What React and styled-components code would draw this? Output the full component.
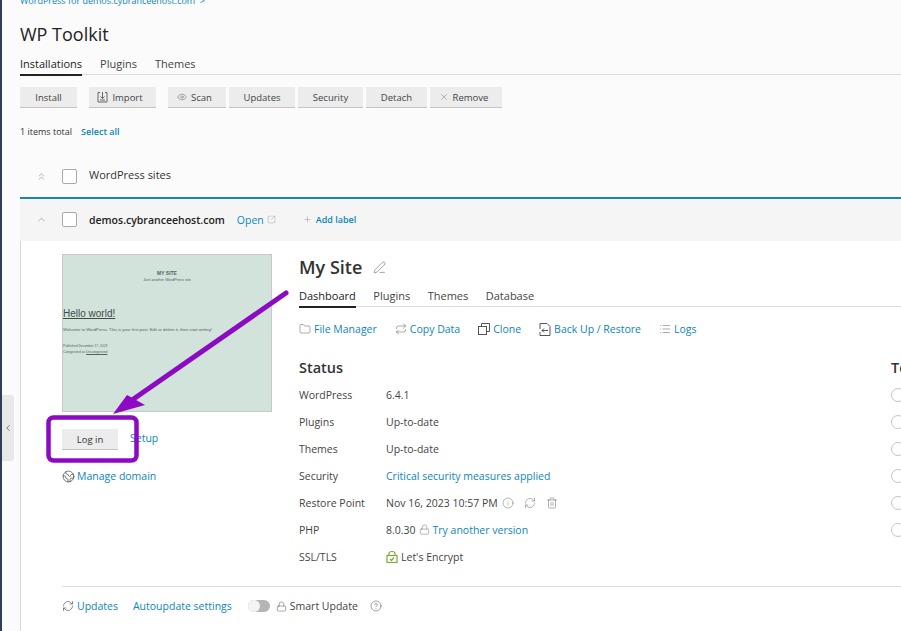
import React from "react";
import styled, { createGlobalStyle } from "styled-components";
import {
  ChevronLeft,
  ChevronUp,
  ChevronsUp,
  Eye,
  X,
  Plus,
  SquareArrowOutUpRight,
  PenLine,
  Folder,
  RefreshCw,
  Repeat,
  List,
  Info,
  Trash2,
  Lock,
  CircleHelp,
  Earth
} from "lucide-react";

const GlobalStyle = createGlobalStyle`
  html, body {
    margin: 0;
    padding: 0;
    width: 901px;
    height: 631px;
    overflow: hidden;
    background: #fbfbfb;
  }
`;

const Page = styled.div`
  position: relative;
  width: 901px;
  height: 631px;
  overflow: hidden;
  box-sizing: border-box;
  padding-left: 20px;
  border-left: 2px solid #2f3e50;
  font-family: "Open Sans", "Liberation Sans", sans-serif;
  font-size: 11px;
  color: #333;
  background: #fbfbfb;
`;

const Content = styled.div`
  margin-left: -2px;
  width: 881px;
`;

const Breadcrumb = styled.div`
  height: 6px;
  line-height: 1px;
  font-size: 9px;
  color: #0e86b8;
  white-space: nowrap;
`;

const Title = styled.h1`
  margin: 14px 0 0;
  font-size: 18px;
  line-height: 28px;
  font-weight: 400;
  color: #222;
`;

const TabBar = styled.div`
  display: flex;
  gap: ${p => p.$gap}px;
  border-bottom: 1px solid #ddd;
  height: 19px;
  margin-top: ${p => p.$top}px;
`;

const Tab = styled.div`
  height: 100%;
  font-size: 11px;
  line-height: 18px;
  color: ${p => (p.$active ? "#222" : "#444")};
  border-bottom: ${p => (p.$active ? "2px solid #222" : "none")};
`;

const Toolbar = styled.div`
  display: flex;
  margin-top: 12px;
`;

const ToolButton = styled.button`
  display: flex;
  align-items: center;
  justify-content: center;
  gap: 4px;
  box-sizing: border-box;
  width: ${p => p.$w}px;
  height: 21px;
  margin-right: ${p => p.$mr || 3}px;
  padding: 0 ${p => (p.$icon ? 5 : 0)}px 0 0;
  border: 0;
  border-bottom: 1px solid #c4c4c4;
  background: #ececec;
  font-family: inherit;
  font-size: 9.5px;
  color: #444;
  svg {
    color: #666;
  }
`;

const Totals = styled.div`
  display: flex;
  gap: 9px;
  margin-top: 17px;
  font-size: 9px;
  line-height: 13px;
`;

const Link = styled.a`
  color: #0e86b8;
  font-size: ${p => p.$size || 10.5}px;
  font-weight: ${p => p.$bold || 400};
  text-decoration: none;
  white-space: nowrap;
`;

const SetupLink = styled(Link)`
  margin-bottom: 3px;
`;

const GroupRow = styled.div`
  display: flex;
  align-items: center;
  height: 22px;
  margin-top: 27px;
  padding-left: 15px;
  font-size: 11px;
`;

const GroupName = styled.span`
  padding-bottom: 3px;
`;

const Caret = styled.span`
  display: flex;
  justify-content: center;
  width: 12px;
  margin-right: 15px;
  color: #777;
`;

const Check = styled.span`
  width: 15px;
  height: 15px;
  box-sizing: border-box;
  border: 1px solid #aaa;
  border-radius: 2px;
  background: #fff;
  margin-right: 12px;
`;

const Card = styled.section`
  margin-top: 10px;
  height: 440px;
  background: #fff;
  border-left: 1px solid #d8d8d8;
`;

const CardHead = styled.div`
  display: flex;
  align-items: center;
  height: 41px;
  margin-left: -1px;
  padding: 0 0 1px 15px;
  background: #f5f5f5;
  border-top: 2px solid #1587b5;
`;

const SiteName = styled.span`
  font-size: 10.5px;
  font-weight: 600;
  color: #222;
  margin-right: 12px;
`;

const OpenLink = styled.span`
  display: flex;
  align-items: center;
  gap: 3px;
  margin-right: 27px;
  color: #0e86b8;
  font-size: 10.5px;
  svg {
    color: #88a;
  }
`;

const AddLabel = styled.span`
  display: flex;
  align-items: center;
  gap: 4px;
  color: #0e86b8;
  font-size: 9px;
  font-weight: 600;
  svg {
    color: #777;
  }
`;

const CardBody = styled.div`
  display: flex;
  padding: 13px 0 0 41px;
`;

const LeftCol = styled.div`
  width: 237px;
  flex: none;
`;

const Preview = styled.div`
  width: 210px;
  height: 158px;
  box-sizing: border-box;
  border: 1px solid #c8c8c8;
  background: #d2e3dc;
  font-family: "Liberation Sans", sans-serif;
  color: #56625e;
  overflow: hidden;
`;

const PreviewTitle = styled.div`
  margin-top: 15px;
  text-align: center;
  font-size: 5px;
  line-height: 7px;
  font-weight: 700;
`;

const PreviewTag = styled.div`
  text-align: center;
  font-size: 3.8px;
  line-height: 6px;
`;

const PreviewHeading = styled.div`
  margin-top: 24px;
  font-size: 10px;
  line-height: 14px;
  text-decoration: underline;
  color: #3f4a47;
`;

const PreviewText = styled.div`
  margin-top: ${p => p.$top}px;
  font-size: ${p => p.$size}px;
  line-height: 6px;
  white-space: nowrap;
  u {
    text-decoration: underline;
  }
`;

const LoginRow = styled.div`
  display: flex;
  align-items: center;
  gap: 12px;
  margin-top: 17px;
`;

const LoginButton = styled.button`
  width: 56px;
  height: 21px;
  padding: 0;
  border: 0;
  border-bottom: 1px solid #c4c4c4;
  background: #ececec;
  font-family: inherit;
  font-size: 9.5px;
  color: #333;
`;

const DomainRow = styled.div`
  display: flex;
  align-items: center;
  gap: 2px;
  margin-top: 19px;
  svg {
    color: #333;
  }
`;

const MainCol = styled.div`
  flex: 1;
  min-width: 0;
`;

const NameRow = styled.div`
  display: flex;
  align-items: center;
  gap: 11px;
  height: 26px;
  svg {
    color: #555;
  }
`;

const SiteTitle = styled.h2`
  margin: 0;
  font-size: 18px;
  line-height: 26px;
  font-weight: 600;
  color: #333;
`;

const Actions = styled.div`
  display: flex;
  align-items: center;
  margin-top: 14px;
  height: 16px;
`;

const Action = styled.span`
  display: flex;
  align-items: center;
  gap: 3px;
  margin-right: 18px;
  color: #0e86b8;
  font-size: 10.5px;
  svg {
    color: #555;
  }
`;

const Columns = styled.div`
  display: flex;
  margin-top: 20px;
`;

const StatusCol = styled.div`
  width: 592px;
  flex: none;
`;

const SectionTitle = styled.h3`
  margin: 0 0 2px;
  font-size: 14.5px;
  line-height: 22px;
  font-weight: 600;
  color: #333;
  white-space: nowrap;
`;

const StatusRow = styled.div`
  display: flex;
  align-items: center;
  height: 27px;
  font-size: 10.5px;
  color: #444;
`;

const StatusLabel = styled.span`
  width: 87px;
  flex: none;
`;

const StatusValue = styled.span`
  display: flex;
  align-items: center;
  gap: 3px;
  svg {
    color: #666;
  }
`;

const RestoreIcons = styled.span`
  display: flex;
  align-items: center;
  gap: 10px;
  margin-left: 1px;
`;

const Radio = styled.div`
  height: 27px;
  display: flex;
  align-items: center;
  &::before {
    content: "";
    width: 12px;
    height: 12px;
    border: 1px solid #c4c4c4;
    border-radius: 50%;
    flex: none;
  }
`;

const Divider = styled.hr`
  margin: 16px 0 0 41px;
  border: 0;
  border-top: 1px solid #ddd;
`;

const Footer = styled.div`
  display: flex;
  align-items: center;
  height: 38px;
  padding-left: 41px;
  font-size: 10.5px;
`;

const FooterItem = styled.span`
  display: flex;
  align-items: center;
  gap: 3px;
  margin-right: ${p => p.$mr}px;
  color: ${p => p.$c || "#0e86b8"};
  svg {
    color: #444;
  }
`;

const Toggle = styled.span`
  position: relative;
  width: 22px;
  height: 12px;
  border-radius: 6px;
  background: #b5b5b5;
  margin-right: 6px;
  &::before {
    content: "";
    position: absolute;
    left: 0;
    top: 0;
    width: 12px;
    height: 12px;
    border-radius: 50%;
    background: #f4f4f4;
  }
`;

const SideHandle = styled.div`
  position: absolute;
  left: 0;
  top: 395px;
  width: 12px;
  height: 66px;
  display: flex;
  align-items: center;
  justify-content: center;
  background: #e8e8e8;
  border-radius: 0 3px 3px 0;
  color: #333;
`;

const Overlay = styled.svg`
  position: absolute;
  left: -2px;
  top: 0;
  pointer-events: none;
`;

const ImportIcon = () => (
  <svg width="11" height="12" viewBox="0 0 11 12" fill="none" stroke="currentColor" strokeWidth="1">
    <path d="M3 1.5H1V11H10V1.5H8M5.5 1V7.5M3.5 5.5L5.5 7.5L7.5 5.5M3 9H8" />
  </svg>
);

const CloneIcon = () => (
  <svg width="12" height="12" viewBox="0 0 12 12" fill="none" stroke="currentColor" strokeWidth="1">
    <path d="M3.5 3V.5H11.5V8.5H9" />
    <rect x=".5" y="3.5" width="8" height="8" />
  </svg>
);

const BackupIcon = () => (
  <svg width="12" height="13" viewBox="0 0 12 13" fill="none" stroke="currentColor" strokeWidth="1">
    <path d="M1 6V.5H8L11 3.5V12.5H1V9" />
    <path d="M9 7.5H3M5 5.5L3 7.5L5 9.5" />
  </svg>
);

const SslIcon = () => (
  <svg width="12" height="13" viewBox="0 0 12 13" fill="none" stroke="#7fa83c" strokeWidth="1.2">
    <rect x="1" y="5.5" width="10" height="7" />
    <path d="M3 5.5V3.5C3 .8 9 .8 9 3.5V5.5M4 9L5.5 10.5L8 7.5" />
  </svg>
);

const items = [
  { label: "Install", w: 57, mr: 12 },
  { label: "Import", w: 67, mr: 12, icon: <ImportIcon /> },
  { label: "Scan", w: 58, icon: <Eye size={10} strokeWidth={1.2} /> },
  { label: "Updates", w: 66 },
  { label: "Security", w: 65 },
  { label: "Detach", w: 61 },
  { label: "Remove", w: 72, icon: <X size={10} strokeWidth={1} /> }
];

export default function App() {
  return (
    <Page>
      <GlobalStyle />
      <Content>
        <Breadcrumb>WordPress for demos.cybranceehost.com &nbsp;&gt;</Breadcrumb>
        <Title>WP Toolkit</Title>
        <TabBar $gap={18} $top={7}>
          <Tab $active>Installations</Tab>
          <Tab>Plugins</Tab>
          <Tab>Themes</Tab>
        </TabBar>
        <Toolbar>
          {items.map(el => (
            <ToolButton key={el.label} $w={el.w} $mr={el.mr} $icon={!!el.icon}>
              {el.icon}
              {el.label}
            </ToolButton>
          ))}
        </Toolbar>
        <Totals>
          <span>1 items total</span>
          <Link $size={9} $bold={600}>Select all</Link>
        </Totals>
        <GroupRow>
          <Caret><ChevronsUp size={11} strokeWidth={1.2} /></Caret>
          <Check />
          <GroupName>WordPress sites</GroupName>
        </GroupRow>
        <Card>
          <CardHead>
            <Caret><ChevronUp size={11} strokeWidth={1.2} /></Caret>
            <Check />
            <SiteName>demos.cybranceehost.com</SiteName>
            <OpenLink>Open <SquareArrowOutUpRight size={9} strokeWidth={1} /></OpenLink>
            <AddLabel><Plus size={9} strokeWidth={1} /> Add label</AddLabel>
          </CardHead>
          <CardBody>
            <LeftCol>
              <Preview>
                <PreviewTitle>MY SITE</PreviewTitle>
                <PreviewTag>Just another WordPress site</PreviewTag>
                <PreviewHeading>Hello world!</PreviewHeading>
                <PreviewText $top={6} $size={4.2}>Welcome to WordPress. This is your first post. Edit or delete it, then start writing!</PreviewText>
                <PreviewText $top={10} $size={3.3}>Published December 17, 2023</PreviewText>
                <PreviewText $top={0} $size={3.3}>Categorized as <u>Uncategorized</u></PreviewText>
              </Preview>
              <LoginRow>
                <LoginButton>Log in</LoginButton>
                <SetupLink>Setup</SetupLink>
              </LoginRow>
              <DomainRow>
                <Earth size={13} strokeWidth={1.2} />
                <Link>Manage domain</Link>
              </DomainRow>
            </LeftCol>
            <MainCol>
              <NameRow>
                <SiteTitle>My Site</SiteTitle>
                <PenLine size={13} strokeWidth={1} />
              </NameRow>
              <TabBar $gap={17.5} $top={7}>
                <Tab $active>Dashboard</Tab>
                <Tab>Plugins</Tab>
                <Tab>Themes</Tab>
                <Tab>Database</Tab>
              </TabBar>
              <Actions>
                <Action><Folder size={12} strokeWidth={1} /> File Manager</Action>
                <Action><Repeat size={12} strokeWidth={1} /> Copy Data</Action>
                <Action><CloneIcon /> Clone</Action>
                <Action><BackupIcon /> Back Up / Restore</Action>
                <Action><List size={12} strokeWidth={1} /> Logs</Action>
              </Actions>
              <Columns>
                <StatusCol>
                  <SectionTitle>Status</SectionTitle>
                  <StatusRow><StatusLabel>WordPress</StatusLabel><StatusValue>6.4.1</StatusValue></StatusRow>
                  <StatusRow><StatusLabel>Plugins</StatusLabel><StatusValue>Up-to-date</StatusValue></StatusRow>
                  <StatusRow><StatusLabel>Themes</StatusLabel><StatusValue>Up-to-date</StatusValue></StatusRow>
                  <StatusRow><StatusLabel>Security</StatusLabel><StatusValue><Link>Critical security measures applied</Link></StatusValue></StatusRow>
                  <StatusRow>
                    <StatusLabel>Restore Point</StatusLabel>
                    <StatusValue>
                      Nov 16, 2023 10:57 PM
                      <RestoreIcons>
                        <Info size={12} strokeWidth={1} />
                        <RefreshCw size={12} strokeWidth={1} />
                        <Trash2 size={12} strokeWidth={1} />
                      </RestoreIcons>
                    </StatusValue>
                  </StatusRow>
                  <StatusRow>
                    <StatusLabel>PHP</StatusLabel>
                    <StatusValue>8.0.30 <Lock size={11} strokeWidth={1} /> <Link>Try another version</Link></StatusValue>
                  </StatusRow>
                  <StatusRow>
                    <StatusLabel>SSL/TLS</StatusLabel>
                    <StatusValue><SslIcon /> Let's Encrypt</StatusValue>
                  </StatusRow>
                </StatusCol>
                <div>
                  <SectionTitle>Tools</SectionTitle>
                  <Radio /><Radio /><Radio /><Radio /><Radio /><Radio />
                </div>
              </Columns>
            </MainCol>
          </CardBody>
          <Divider />
          <Footer>
            <FooterItem $mr={15}><RefreshCw size={12} strokeWidth={1.2} /> Updates</FooterItem>
            <FooterItem $mr={16}>Autoupdate settings</FooterItem>
            <Toggle />
            <FooterItem $mr={12} $c="#444"><Lock size={11} strokeWidth={1} /> Smart Update</FooterItem>
            <FooterItem $mr={0}><CircleHelp size={12} strokeWidth={1} /></FooterItem>
          </Footer>
        </Card>
      </Content>
      <SideHandle><ChevronLeft size={10} strokeWidth={1.5} /></SideHandle>
      <Overlay width="901" height="631" viewBox="0 0 901 631">
        <rect x="48.5" y="417.5" width="88" height="43" rx="5" fill="none" stroke="#8c0ac4" strokeWidth="4.5" />
        <path d="M286 293 L122 407" stroke="#8c0ac4" strokeWidth="5" strokeLinecap="round" />
        <path d="M113 414 L127 395 L145 405 Z" fill="#8c0ac4" />
      </Overlay>
    </Page>
  );
}
